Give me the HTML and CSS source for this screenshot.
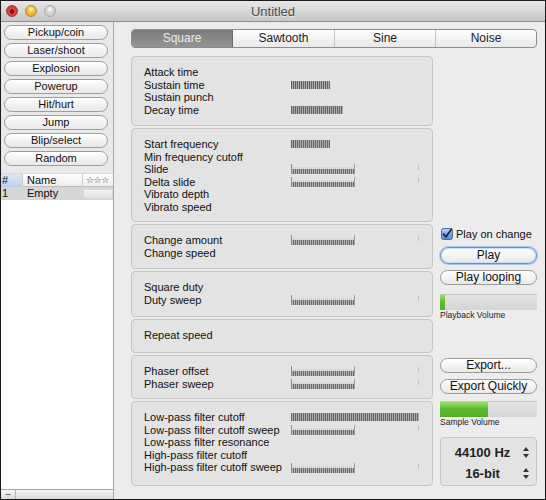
FILE: index.html
```html
<!DOCTYPE html>
<html>
<head>
<meta charset="utf-8">
<title>Untitled</title>
<link rel="stylesheet" href="styles.css">
</head>
<body>
<div class="window">
  <div class="titlebar">
    <div class="lights">
      <span class="light red"></span>
      <span class="light yellow"></span>
      <span class="light gray"></span>
    </div>
    <div class="title">Untitled</div>
    <div></div>
  </div>
  <div class="content">
    <aside class="sidebar">
      <div class="presets">
        <button class="pbtn">Pickup/coin</button>
        <button class="pbtn">Laser/shoot</button>
        <button class="pbtn">Explosion</button>
        <button class="pbtn">Powerup</button>
        <button class="pbtn">Hit/hurt</button>
        <button class="pbtn">Jump</button>
        <button class="pbtn">Blip/select</button>
        <button class="pbtn">Random</button>
      </div>
      <div class="table">
        <div class="thead">
          <span class="c-num sorted">#</span>
          <span class="c-name">Name</span>
          <span class="c-star">☆☆☆</span>
        </div>
        <div class="trow">
          <span class="c-num">1</span>
          <span class="c-name">Empty</span>
          <span class="c-star"><span class="rating"></span></span>
        </div>
      </div>
      <div class="bottombar">
        <span class="minus">–</span>
        <span class="bb-rest"></span>
      </div>
    </aside>
    <main class="main">
      <div class="tabs">
        <span class="tab active">Square</span>
        <span class="tab">Sawtooth</span>
        <span class="tab">Sine</span>
        <span class="tab">Noise</span>
      </div>
      <div class="row">
        <div class="boxes">
          <div class="box b1">
            <div class="prow"><span>Attack time</span><span></span></div>
            <div class="prow"><span>Sustain time</span><span class="bar" style="width:39px"></span></div>
            <div class="prow"><span>Sustain punch</span><span></span></div>
            <div class="prow"><span>Decay time</span><span class="bar" style="width:52px"></span></div>
          </div>
          <div class="box b2">
            <div class="prow"><span>Start frequency</span><span class="bar" style="width:39px"></span></div>
            <div class="prow"><span>Min frequency cutoff</span><span></span></div>
            <div class="prow"><span>Slide</span><span class="bi"></span></div>
            <div class="prow"><span>Delta slide</span><span class="bi"></span></div>
            <div class="prow"><span>Vibrato depth</span><span></span></div>
            <div class="prow"><span>Vibrato speed</span><span></span></div>
          </div>
          <div class="box b3">
            <div class="prow"><span>Change amount</span><span class="bi"></span></div>
            <div class="prow"><span>Change speed</span><span></span></div>
          </div>
          <div class="box b4">
            <div class="prow"><span>Square duty</span><span></span></div>
            <div class="prow"><span>Duty sweep</span><span class="bi"></span></div>
          </div>
          <div class="box b5">
            <div class="prow"><span>Repeat speed</span><span></span></div>
          </div>
          <div class="box b6">
            <div class="prow"><span>Phaser offset</span><span class="bi"></span></div>
            <div class="prow"><span>Phaser sweep</span><span class="bi"></span></div>
          </div>
          <div class="box b7">
            <div class="prow"><span>Low-pass filter cutoff</span><span class="bar" style="width:128px"></span></div>
            <div class="prow"><span>Low-pass filter cutoff sweep</span><span class="bi"></span></div>
            <div class="prow"><span>Low-pass filter resonance</span><span></span></div>
            <div class="prow"><span>High-pass filter cutoff</span><span></span></div>
            <div class="prow"><span>High-pass filter cutoff sweep</span><span class="bi"></span></div>
          </div>
        </div>
        <div class="side">
          <label class="check">
            <svg class="cbox" width="12" height="12" viewBox="0 0 12 12">
              <defs>
                <linearGradient id="cg" x1="0" y1="0" x2="0" y2="1">
                  <stop offset="0" stop-color="#bcd4f2"/>
                  <stop offset="0.5" stop-color="#7ea8e0"/>
                  <stop offset="1" stop-color="#5a8fd6"/>
                </linearGradient>
              </defs>
              <rect x="0.5" y="0.5" width="11" height="11" rx="2" fill="url(#cg)" stroke="#4a6a98"/>
              <path d="M2.6 6.2 L5 8.8 L10.4 1.2" fill="none" stroke="#1b2340" stroke-width="1.7" stroke-linecap="round" stroke-linejoin="round"/>
            </svg>
            <span>Play on change</span>
          </label>
          <button class="sbtn focus">Play</button>
          <button class="sbtn second">Play looping</button>
          <div class="vol first"><span class="fill" style="width:5px"></span></div>
          <div class="vlabel">Playback Volume</div>
          <button class="sbtn export">Export...</button>
          <button class="sbtn second">Export Quickly</button>
          <div class="vol sample"><span class="fill" style="width:48px"></span></div>
          <div class="vlabel">Sample Volume</div>
          <div class="fmt">
            <div class="fmt-row">
              <span class="fmt-val">44100 Hz</span>
              <svg class="step" width="6" height="11" viewBox="0 0 6 11"><path d="M3 0 L6 4 L0 4 Z M3 11 L6 7 L0 7 Z" fill="#333"/></svg>
            </div>
            <div class="fmt-row">
              <span class="fmt-val">16-bit</span>
              <svg class="step" width="6" height="11" viewBox="0 0 6 11"><path d="M3 0 L6 4 L0 4 Z M3 11 L6 7 L0 7 Z" fill="#333"/></svg>
            </div>
          </div>
        </div>
      </div>
    </main>
  </div>
</div>
</body>
</html>
```
FILE: styles.css
```css
* { box-sizing: border-box; }
html, body { margin: 0; padding: 0; }
body {
  font-family: "Liberation Sans", Arial, sans-serif;
  font-size: 11px;
  color: #111;
  background: #000;
}
.window {
  width: 546px;
  height: 500px;
  border: 1px solid #1a1a1a;
  display: flex;
  flex-direction: column;
  background: #ececec;
  overflow: hidden;
}
.titlebar {
  height: 21px;
  flex: none;
  display: grid;
  grid-template-columns: 1fr auto 1fr;
  align-items: center;
  background: linear-gradient(#e8e8e8, #c6c6c6);
  border-bottom: 1px solid #8e8e8e;
}
.lights { display: flex; gap: 7px; padding-left: 5px; padding-bottom: 1px; }
.light {
  width: 12px; height: 12px; border-radius: 50%;
  display: block;
}
.light.red {
  background: radial-gradient(circle at 50% 55%, #8a1010 0 2px, #e0463f 2.5px, #c63029 100%);
  border: 1px solid #a23a36;
}
.light.yellow {
  background: radial-gradient(circle at 50% 35%, #fde8a0 0 1px, #f6c04b 3px, #e09a20 100%);
  border: 1px solid #b88a30;
}
.light.gray {
  background: radial-gradient(circle at 50% 35%, #f5f5f5 0 1px, #d8d8d8 3px, #c4c4c4 100%);
  border: 1px solid #a6a6a6;
}
.title {
  font-size: 13px;
  color: #4a4a4a;
  text-shadow: 0 1px 0 rgba(255,255,255,0.6);
}
.content { flex: 1; display: flex; min-height: 0; }

/* sidebar */
.sidebar {
  width: 113px;
  flex: none;
  border-right: 1px solid #a9a9a9;
  display: flex;
  flex-direction: column;
  background: #fff;
}
.presets {
  background: #e9e9e9;
  padding: 3px 0 7px 3px;
  display: flex;
  flex-direction: column;
  gap: 3px;
}
.pbtn {
  width: 104px;
  height: 15px;
  border: 1px solid #9d9d9d;
  border-radius: 8px;
  background: linear-gradient(#ffffff, #f0f0f0 60%, #e9e9e9);
  font-family: inherit;
  font-size: 11px;
  color: #111;
  padding: 0;
  line-height: 13px;
  text-align: center;
}
.table { flex: 1; background: #fff; }
.thead, .trow {
  display: grid;
  grid-template-columns: 22px 60px 1fr;
  height: 13px;
  line-height: 13px;
}
.thead {
  height: 14px;
  background: linear-gradient(#ffffff, #ececec);
  border-bottom: 1px solid #bcbcbc;
  border-top: 1px solid #d8d8d8;
}
.thead > span { border-right: 1px solid #cfcfcf; }
.thead > span:last-child { border-right: none; }
.thead .sorted { background: linear-gradient(#dbe6f5, #bcd0ea); }
.thead .c-num { padding-left: 1px; }
.thead .c-name { padding-left: 4px; }
.thead .c-star { padding-left: 3px; font-size: 9px; color: #333; letter-spacing: -0.5px; font-family: "DejaVu Sans", sans-serif; }
.trow { background: #d6d6d6; }
.trow .c-num { padding-left: 1px; }
.trow .c-name { padding-left: 4px; }
.trow .c-star { display: flex; align-items: center; padding: 0 1px 0 1px; }
.rating {
  display: block; width: 100%; height: 8px;
  background: linear-gradient(#f2f2f2, #e2e2e2);
  border-radius: 1px;
}
.bottombar {
  height: 10px;
  flex: none;
  display: flex;
  border-top: 1px solid #a3a3a3;
  background: linear-gradient(#f6f6f6, #dadada);
}
.minus {
  width: 15px;
  border-right: 1px solid #b3b3b3;
  font-size: 9px;
  line-height: 8px;
  text-align: center;
  color: #333;
}
.bb-rest { flex: 1; }

/* main */
.main {
  flex: 1;
  padding: 7px 0 0 17px;
  background: #ececec;
}
.tabs {
  width: 406px;
  height: 19px;
  display: grid;
  grid-template-columns: repeat(4, 1fr);
  border: 1px solid #8c8c8c;
  border-radius: 4px;
  overflow: hidden;
  background: linear-gradient(#ffffff, #f1f1f1 55%, #e8e8e8);
  margin-bottom: 8px;
}
.tab {
  font-size: 12px;
  line-height: 17px;
  text-align: center;
  color: #222;
  border-left: 1px solid #c4c4c4;
}
.tab:first-child { border-left: none; }
.tab.active {
  background: linear-gradient(#7b7b7b, #949494);
  color: #ededed;
  border-right: 1px solid #6a6a6a;
}
.tab.active + .tab { border-left: none; }
.row { display: flex; }
.boxes {
  width: 302px;
  display: flex;
  flex-direction: column;
  gap: 2px;
}
.box {
  background: #e3e3e3;
  border: 1px solid #c6c6c6;
  border-radius: 4px;
  padding: 9px 0 0 12px;
}
.b1 { height: 70px; }
.b2 { height: 94px; }
.b3 { height: 45px; }
.b4 { height: 46px; }
.b5 { height: 34px; }
.b6 { height: 44px; }
.b7 { height: 85px; }
.prow {
  display: grid;
  grid-template-columns: 147px 128px;
  align-items: center;
  height: 12.6px;
  line-height: 12.6px;
  font-size: 11px;
  color: #111;
  white-space: nowrap;
}
.bar {
  display: block;
  height: 8px;
  background: repeating-linear-gradient(90deg, #636363 0 1px, #adadad 1px 2px);
}
.bi {
  display: block;
  width: 128px;
  height: 10px;
  background:
    linear-gradient(#8a8a8a, #8a8a8a) 0 0 / 1px 10px no-repeat,
    linear-gradient(#a0a0a0, #a0a0a0) 63px 0 / 1px 10px no-repeat,
    linear-gradient(#bdbdbd, #bdbdbd) 127px 1px / 1px 5px no-repeat,
    repeating-linear-gradient(90deg, #6a6a6a 0 1px, #b4b4b4 1px 2px) 0 5px / 64px 5px no-repeat,
    repeating-linear-gradient(90deg, #cdcdcd 0 1px, transparent 1px 2px) 0 3px / 64px 2px no-repeat;
}

/* side panel */
.side {
  width: 97px;
  margin-left: 7px;
  padding-top: 172px;
  display: flex;
  flex-direction: column;
}
.check {
  height: 12px;
  display: flex;
  align-items: center;
  gap: 3px;
  padding-left: 1px;
  font-size: 11px;
  white-space: nowrap;
}
.cbox { display: block; flex: none; }
.sbtn {
  width: 97px;
  height: 15px;
  border: 1px solid #9a9a9a;
  border-radius: 8px;
  background: linear-gradient(#ffffff, #f1f1f1 60%, #e8e8e8);
  font-family: inherit;
  font-size: 12px;
  line-height: 13px;
  color: #111;
  padding: 0;
  text-align: center;
}
.sbtn.focus {
  margin-top: 7px;
  height: 17px;
  border: 1px solid #6d8fbd;
  box-shadow: 0 0 0 1px #a8c4e8, inset 0 0 0 1px #c9dcf3;
  border-radius: 9px;
}
.sbtn.second { margin-top: 6px; }
.sbtn.export { margin-top: 38px; }
.vol {
  height: 16px;
  background: linear-gradient(#e4e4e4, #d4d4d4);
  border-top: 1px solid #c6c6c6;
}
.vol.first { margin-top: 9px; }
.vol.sample { margin-top: 7px; }
.fill {
  display: block;
  height: 100%;
  background: linear-gradient(#9be06a, #5dbb2e 45%, #52ad25);
}
.vlabel {
  height: 10px;
  font-size: 8.5px;
  line-height: 10px;
  color: #222;
  white-space: nowrap;
}
.fmt {
  margin-top: 10px;
  height: 49px;
  background: #e3e3e3;
  border: 1px solid #c6c6c6;
  border-radius: 4px;
  padding: 4px 0 0 4px;
  display: flex;
  flex-direction: column;
}
.fmt-row {
  height: 21px;
  display: flex;
  align-items: center;
}
.fmt-val {
  width: 75px;
  text-align: center;
  font-size: 13px;
  font-weight: bold;
  color: #222;
}
.step { display: block; margin-left: 3px; }
```
